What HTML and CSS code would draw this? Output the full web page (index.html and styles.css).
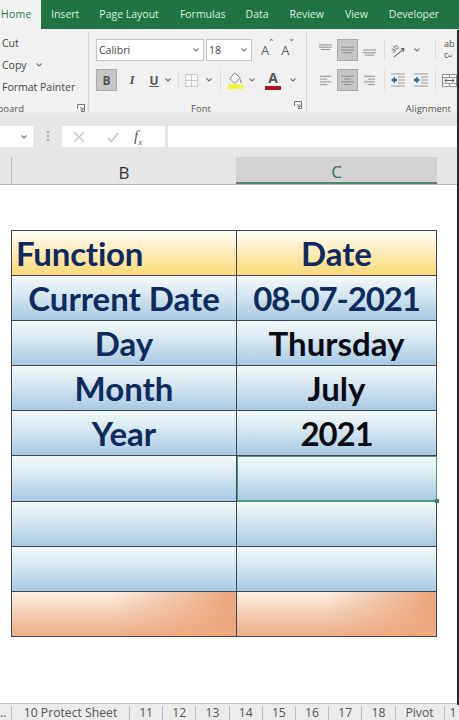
FILE: index.html
```html
<!DOCTYPE html>
<html lang="en">
<head>
	<meta charset="UTF-8">
	<title>Excel date functions</title>
	<link rel="stylesheet" href="styles.css">
</head>
<body>
	<svg class="defs" width="0" height="0">
		<symbol id="chev" viewBox="0 0 8 8"><path d="M1.5 2.5 4 5l2.500-2.500" fill="none" stroke="#777" stroke-width="1.100"/></symbol>
		<symbol id="launch" viewBox="0 0 8 8"><path d="M.5 5V.5H7.500V7.500H4M3 3l3 3M6 3.500V6H3.500" fill="none" stroke="#777"/></symbol>
	</svg>

	<div class="tabs">
		<span class="tab active">Home</span>
		<span class="tab t-insert">Insert</span>
		<span class="tab t-layout">Page Layout</span>
		<span class="tab t-formulas">Formulas</span>
		<span class="tab t-data">Data</span>
		<span class="tab t-review">Review</span>
		<span class="tab t-view">View</span>
		<span class="tab t-dev">Developer</span>
	</div>

	<div class="ribbon">
		<div class="group clip">
			<div class="clip-list">
				<span>Cut</span>
				<span class="copy">Copy <svg class="chev"><use href="#chev"/></svg></span>
				<span>Format Painter</span>
			</div>
			<div class="group-label clip-label">
				<span class="clipped"><span>Clipboard</span></span>
				<svg class="launch"><use href="#launch"/></svg>
			</div>
		</div>

		<div class="group font">
			<div class="tool-row">
				<div class="combo name-box">Calibri<svg class="chev"><use href="#chev"/></svg></div>
				<div class="combo size-box">18<svg class="chev"><use href="#chev"/></svg></div>
				<span class="grow-a a1">A<i>&#710;</i></span>
				<span class="grow-a a2">A<i>&#711;</i></span>
			</div>
			<div class="tool-row row2">
				<span class="btn on b-b">B</span>
				<span class="btn b-i">I</span>
				<span class="btn b-u">U</span>
				<svg class="chev c-u"><use href="#chev"/></svg>
				<span class="sep s1"></span>
				<svg class="ico borders" viewBox="0 0 14 14"><path d="M.5.500h13v13H.5zM7 .5v13M.5 7h13" fill="#fafafa" stroke="#c6c6c6"/></svg>
				<svg class="chev c-b"><use href="#chev"/></svg>
				<span class="sep s2"></span>
				<svg class="ico fill" viewBox="0 0 16 18"><path d="M7 1 2 7l5 5 6-6z" fill="#fbfbfb" stroke="#777"/><path d="M13 7c2 2 2 4 1 5-1-1-2-3-1-5z" fill="#999"/><rect y="13" width="16" height="5" fill="#f5f23c"/></svg>
				<svg class="chev c-f"><use href="#chev"/></svg>
				<span class="font-color">A</span>
				<svg class="chev c-c"><use href="#chev"/></svg>
			</div>
			<div class="group-label font-label">
				<span>Font</span>
				<svg class="launch"><use href="#launch"/></svg>
			</div>
		</div>

		<div class="group align">
			<div class="tool-row">
				<svg class="ico lines la1" viewBox="0 0 14 14"><path d="M0 1.500h14M0 4h14M2 6.500h10" stroke="#888"/></svg>
				<span class="btn on al"><svg class="ico lines" viewBox="0 0 14 14"><path d="M0 4h14M0 7h14M2 10h10" stroke="#888"/></svg></span>
				<svg class="ico lines la3" viewBox="0 0 14 14"><path d="M0 7h14M0 10h14M2 12.500h10" stroke="#888"/></svg>
				<span class="sep s3"></span>
				<svg class="ico orient" viewBox="0 0 16 16"><text x="0" y="9" transform="rotate(-45 4 7)" font-size="8" font-family="Open Sans, sans-serif" fill="#666">ab</text><path d="M3 15 14 6M14 6h-3.500M14 6l-1 3.500" fill="none" stroke="#666" stroke-width="1.200"/></svg>
				<svg class="chev c-o"><use href="#chev"/></svg>
				<span class="sep s4"></span>
				<span class="wrap-text">ab<br>c<small>&#8629;</small></span>
			</div>
			<div class="tool-row row2">
				<svg class="ico lines la1" viewBox="0 0 14 14"><path d="M1 3h12M1 6h8M1 9h12M1 12h8" stroke="#888"/></svg>
				<span class="btn on al"><svg class="ico lines" viewBox="0 0 14 14"><path d="M0 3h14M3 6h8M0 9h14M3 12h8" stroke="#888"/></svg></span>
				<svg class="ico lines la3" viewBox="0 0 14 14"><path d="M1 3h12M5 6h8M1 9h12M5 12h8" stroke="#888"/></svg>
				<span class="sep s3b"></span>
				<svg class="ico indent" viewBox="0 0 14 14"><path d="M0 1h14M7 4h7M7 7h7M7 10h7M0 13h14" stroke="#999"/><path d="M0 7l4-3.500v2h2v3H4v2z" fill="#3f7196"/></svg>
				<svg class="ico indent i2" viewBox="0 0 14 14"><path d="M0 1h14M7 4h7M7 7h7M7 10h7M0 13h14" stroke="#999"/><path d="M6 7 2 3.500v2H0v3h2v2z" fill="#3f7196"/></svg>
				<span class="sep s4b"></span>
				<svg class="ico merge" viewBox="0 0 16 16"><path d="M.5 1.500h15v13H.5zM.5 5h15M.5 11h15M8 1.500V5M8 11v3.500" fill="#fafafa" stroke="#888"/><path d="M3 8h10M3 8l2-1.500M3 8l2 1.500M13 8l-2-1.500M13 8l-2 1.500" fill="none" stroke="#555"/></svg>
			</div>
			<div class="group-label align-label"><span>Alignment</span></div>
		</div>
	</div>

	<div class="formula-bar">
		<div class="name-input"><svg class="chev"><use href="#chev"/></svg></div>
		<div class="dots"></div>
		<div class="fx-box">
			<svg class="ico x-ico" viewBox="0 0 12 12"><path d="M1 1l10 10M11 1 1 11" stroke="#c8c8c8" stroke-width="1.500"/></svg>
			<svg class="ico ok-ico" viewBox="0 0 12 12"><path d="M1 7l3.500 3.500L11 2" fill="none" stroke="#c8c8c8" stroke-width="1.800"/></svg>
			<span class="fx">f<sub>x</sub></span>
		</div>
		<div class="formula-input"></div>
	</div>

	<div class="col-headers">
		<div class="col-a"></div>
		<div class="col-b">B</div>
		<div class="col-c">C</div>
	</div>

	<div class="sheet">
		<div class="grid">
			<div class="cell head left">Function</div>
			<div class="cell head">Date</div>
			<div class="cell blue">Current Date</div>
			<div class="cell blue num">08-07-2021</div>
			<div class="cell blue">Day</div>
			<div class="cell blue dark">Thursday</div>
			<div class="cell blue">Month</div>
			<div class="cell blue dark">July</div>
			<div class="cell blue">Year</div>
			<div class="cell blue dark num">2021</div>
			<div class="cell blue"></div>
			<div class="cell blue selected"></div>
			<div class="cell blue"></div>
			<div class="cell blue"></div>
			<div class="cell blue"></div>
			<div class="cell blue"></div>
			<div class="cell orange"></div>
			<div class="cell orange"></div>
		</div>
	</div>

	<div class="sheet-tabs">
		<span class="st st-0">..</span>
		<span class="st st-1">10 Protect Sheet</span>
		<span class="st">11</span>
		<span class="st">12</span>
		<span class="st">13</span>
		<span class="st">14</span>
		<span class="st">15</span>
		<span class="st">16</span>
		<span class="st">17</span>
		<span class="st">18</span>
		<span class="st st-p">Pivot</span>
		<span class="st st-e">1</span>
	</div>
</body>
</html>
```

FILE: styles.css
```css
* {
	margin: 0;
	padding: 0;
	box-sizing: border-box;
}
html, body {
	width: 459px;
	height: 720px;
	overflow: hidden;
}
body {
	position: relative;
	display: flex;
	flex-direction: column;
	font-family: "Open Sans", "Noto Sans", sans-serif;
	font-size: 11px;
	color: #444;
	background: #fff;
}
/* dark edge of the video frame, runs over everything on the right */
body::after {
	content: "";
	position: absolute;
	top: 30px;
	right: 0;
	bottom: 15px;
	width: 2px;
	background: #2a2a2a;
}
.defs {
	position: absolute;
}

/* top tabs */
.tabs {
	display: flex;
	height: 29px;
	flex: none;
	background: #217346;
}
.tab {
	line-height: 29px;
	font-size: 10.500px;
	color: #d9f2df;
	white-space: nowrap;
}
.tab.active {
	width: 41px;
	padding-left: 1px;
	background: #f1f1f1;
	color: #2b7a50;
	letter-spacing: .2px;
}
.t-insert { margin-left: 10px; }
.t-layout { margin-left: 20px; }
.t-formulas { margin-left: 21px; }
.t-data { margin-left: 20px; }
.t-review { margin-left: 21px; }
.t-view { margin-left: 21px; }
.t-dev { margin-left: 21px; }

/* ribbon */
.ribbon {
	display: flex;
	height: 87px;
	flex: none;
	background: #f1f1f1;
	border-bottom: 4px solid #e9e9e9;
}
.group {
	height: 79px;
	margin-top: 4px;
	padding-top: 6px;
	border-right: 1px solid #d4d4d4;
}
.group-label {
	display: flex;
	align-items: center;
	height: 14px;
	margin-top: 10px;
	font-size: 9.500px;
	color: #555;
}
.launch {
	width: 8px;
	height: 8px;
	flex: none;
}
.chev {
	width: 8px;
	height: 8px;
	flex: none;
}
.ico {
	flex: none;
}

.clip {
	width: 89px;
}
.clip-list {
	display: flex;
	flex-direction: column;
	height: 69px;
	padding-left: 2px;
	margin-top: -7px;
	font-size: 10.500px;
	line-height: 22px;
}
.copy .chev {
	margin-left: 6px;
}
.clip-label {
	margin-top: 0;
}
.clipped {
	display: flex;
	justify-content: flex-end;
	width: 24px;
	overflow: hidden;
}
.clip-label .launch {
	margin-left: 53px;
}

.font {
	position: relative;
	width: 218px;
	padding-left: 7px;
}
.tool-row {
	display: flex;
	align-items: center;
	height: 22px;
}
.row2 {
	margin-top: 8px;
}
.combo {
	display: flex;
	align-items: center;
	justify-content: space-between;
	height: 22px;
	padding: 0 3px 0 2px;
	background: #fff;
	border: 1px solid #c6c6c6;
	font-size: 10.500px;
}
.name-box {
	width: 108px;
}
.size-box {
	width: 46px;
	margin-left: 2px;
}
.grow-a {
	position: relative;
	font-size: 13px;
	color: #666;
}
.grow-a i {
	position: absolute;
	top: -4px;
	right: -4px;
	font-style: normal;
	font-size: 10px;
}
.a1 { margin-left: 9px; }
.a2 { margin-left: 12px; }

.btn {
	display: flex;
	align-items: center;
	justify-content: center;
	width: 21px;
	height: 22px;
	flex: none;
	font-size: 12px;
	color: #555;
}
.btn.on {
	background: #c6c6c6;
	border: 1px solid #aaa;
}
.b-b { font-weight: 700; }
.b-i {
	margin-left: 8px;
	width: 14px;
	font-style: italic;
	font-family: "Liberation Serif", serif;
	font-weight: 700;
	font-size: 13px;
}
.b-u {
	margin-left: 8px;
	width: 14px;
	font-weight: 700;
	text-decoration: underline;
}
.c-u { margin-left: 3px; }
.sep {
	width: 1px;
	height: 20px;
	flex: none;
	background: #dcdcdc;
}
.s1 { margin-left: 6px; }
.borders {
	width: 13px;
	height: 13px;
	margin-left: 6px;
}
.c-b { margin-left: 7px; }
.s2 { margin-left: 7px; }
.fill {
	width: 15px;
	height: 17px;
	margin-left: 7px;
}
.c-f { margin-left: 5px; }
.font-color {
	width: 16px;
	margin-left: 9px;
	font-size: 14px;
	font-weight: 700;
	line-height: 16px;
	text-align: center;
	color: #555;
	border-bottom: 4px solid #b01226;
}
.c-c { margin-left: 8px; }
.font-label {
	justify-content: center;
}
.font-label .launch {
	position: absolute;
	right: 4px;
	bottom: 3px;
}

.align {
	flex: 1;
	padding-left: 12px;
	border-right: 0;
}
.lines {
	width: 13px;
	height: 14px;
}
.la1 { margin-left: 0; }
.al { margin-left: 5px; }
.la3 { margin-left: 5px; }
.s3 { margin-left: 8px; }
.s3b { margin-left: 8px; }
.orient {
	width: 15px;
	height: 15px;
	margin-left: 6px;
	overflow: visible;
}
.c-o { margin-left: 7px; }
.s4 { margin-left: 14px; }
.wrap-text {
	margin-left: 8px;
	font-size: 9px;
	line-height: 11px;
	color: #555;
}
.wrap-text small {
	font-size: 6px;
}
.indent {
	width: 14px;
	height: 14px;
	margin-left: 6px;
}
.i2 { margin-left: 9px; }
.s4b { margin-left: 7px; }
.merge {
	width: 15px;
	height: 15px;
	margin-left: 6px;
}
.align-label {
	justify-content: flex-end;
	padding-right: 8px;
}

/* formula bar */
.formula-bar {
	display: flex;
	align-items: stretch;
	height: 32px;
	flex: none;
	padding: 10px 0 1px;
	background: #e6e6e6;
}
.name-input {
	display: flex;
	align-items: center;
	justify-content: flex-end;
	width: 33px;
	padding-right: 5px;
	background: #fff;
}
.dots {
	width: 2px;
	margin: 5px 0 5px 14px;
	background: repeating-linear-gradient(#aaa 0 2px, transparent 2px 4px);
}
.fx-box {
	display: flex;
	align-items: center;
	width: 103px;
	margin-left: 13px;
	padding-left: 11px;
	background: #fff;
}
.x-ico {
	width: 12px;
	height: 12px;
}
.ok-ico {
	width: 12px;
	height: 12px;
	margin-left: 22px;
}
.fx {
	margin-left: 15px;
	font-family: "Liberation Serif", serif;
	font-style: italic;
	font-size: 15px;
	line-height: 15px;
	color: #555;
}
.fx sub {
	font-size: 9px;
	line-height: 0;
}
.formula-input {
	flex: 1;
	margin-left: 3px;
	background: #fff;
}

/* column headers */
.col-headers {
	display: flex;
	height: 37px;
	flex: none;
	padding-top: 9px;
	background: #e6e6e6;
	border-bottom: 1px solid #b4b4b4;
}
.col-a {
	width: 12px;
	border-right: 1px solid #b4b4b4;
}
.col-b, .col-c {
	display: flex;
	align-items: center;
	justify-content: center;
	font-size: 17px;
	padding-top: 3px;
}
.col-b {
	width: 224px;
	color: #333;
}
.col-c {
	width: 201px;
	background: #d2d2d2;
	color: #2d7355;
	border-bottom: 2px solid #4d8a6d;
}

/* sheet */
.sheet {
	flex: 1;
	padding: 44.500px 0 0 11px;
}
.grid {
	display: grid;
	grid-template-columns: 225px 200px;
	grid-auto-rows: 45.200px;
	width: 426px;
	border-top: 1px solid #3f4650;
	border-left: 1px solid #3f4650;
	font-family: Lato, "Liberation Sans", sans-serif;
	font-size: 33px;
	font-weight: 700;
	color: #0e2a60;
}
.cell {
	display: flex;
	align-items: center;
	justify-content: center;
	border-right: 1px solid #3f4650;
	border-bottom: 1px solid #3f4650;
	white-space: nowrap;
}
.left {
	justify-content: flex-start;
	padding-left: 4px;
	letter-spacing: -.2px;
}
.num {
	letter-spacing: -1.100px;
}
.head {
	background: linear-gradient(#fffef5, #fbd878);
}
.blue {
	background: linear-gradient(#f3fafa, #d9e8f0 40%, #a8cae3);
}
.dark {
	color: #0b0b14;
}
.orange {
	background: linear-gradient(90deg, rgba(235, 165, 122, 0) 45%, #eca87e 97%), linear-gradient(#fbeee4, #f3cdb2 50%, #ecae88);
}
.selected {
	position: relative;
	border: 1px solid #4f9a75;
	border-bottom-width: 2px;
}
.selected::after {
	content: "";
	position: absolute;
	right: -3px;
	bottom: -3px;
	width: 4px;
	height: 4px;
	background: #3f7f60;
}

/* sheet tabs */
.sheet-tabs {
	display: flex;
	height: 17px;
	flex: none;
	overflow: hidden;
	background: #ebebeb;
	border-top: 1px solid #c4c4c4;
	font-size: 12.200px;
	color: #555;
}
.st {
	width: 33.200px;
	flex: none;
	margin-top: 2px;
	line-height: 14px;
	text-align: center;
	border-right: 1px solid #bbb;
	white-space: nowrap;
}
.st-0 { width: 12px; text-align: left; }
.st-1 { width: 118px; }
.st-p { width: 49px; }
.st-e { width: 14px; border-right: 0; text-align: right; padding-right: 2px; }
```
